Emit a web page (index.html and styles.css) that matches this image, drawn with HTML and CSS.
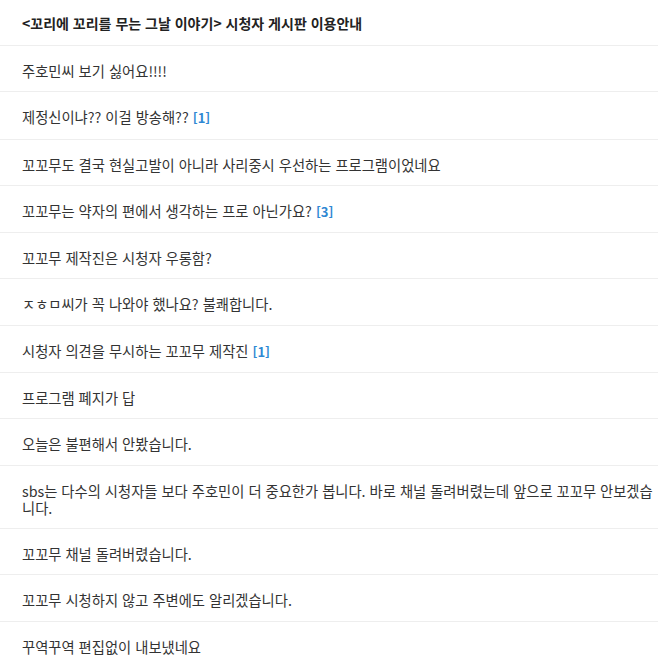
FILE: index.html
```html
<!DOCTYPE html>
<html lang="ko">
<head>
<meta charset="utf-8">
<link rel="stylesheet" href="styles.css">
</head>
<body>
<div class="board">
  <div class="head">&lt;꼬리에 꼬리를 무는 그날 이야기&gt; 시청자 게시판 이용안내</div>
  <ul class="list">
    <li class="item">주호민씨 보기 싫어요!!!!</li>
    <li class="item">제정신이냐?? 이걸 방송해?? <span class="cnt">[1]</span></li>
    <li class="item">꼬꼬무도 결국 현실고발이 아니라 사리중시 우선하는 프로그램이었네요</li>
    <li class="item">꼬꼬무는 약자의 편에서 생각하는 프로 아닌가요? <span class="cnt">[3]</span></li>
    <li class="item">꼬꼬무 제작진은 시청자 우롱함?</li>
    <li class="item">ㅈㅎㅁ씨가 꼭 나와야 했나요? 불쾌합니다.</li>
    <li class="item">시청자 의견을 무시하는 꼬꼬무 제작진 <span class="cnt">[1]</span></li>
    <li class="item">프로그램 폐지가 답</li>
    <li class="item">오늘은 불편해서 안봤습니다.</li>
    <li class="item">sbs는 다수의 시청자들 보다 주호민이 더 중요한가 봅니다. 바로 채널 돌려버렸는데 앞으로 꼬꼬무 안보겠습니다.</li>
    <li class="item">꼬꼬무 채널 돌려버렸습니다.</li>
    <li class="item">꼬꼬무 시청하지 않고 주변에도 알리겠습니다.</li>
    <li class="item">꾸역꾸역 편집없이 내보냈네요</li>
  </ul>
</div>
</body>
</html>
```
FILE: styles.css
```css
html, body {
  margin: 0;
  padding: 0;
  background: #fff;
}
body {
  font-family: "Noto Sans CJK KR", "Noto Sans", sans-serif;
  font-size: 14.3px;
  color: #333;
}
.board {
  width: 658px;
}
.head {
  font-weight: bold;
  font-size: 14px;
  color: #222;
  line-height: 17px;
  padding: 15px 22px 13px 22px;
  border-bottom: 1px solid #eee;
}
.list {
  list-style: none;
  margin: 0;
  padding: 0;
}
.item {
  line-height: 17px;
  padding: 16px 0 12.3px 22px;
  border-bottom: 1px solid #eee;
}
.cnt {
  color: #2f88d3;
  font-weight: bold;
  font-size: 13px;
}
```
